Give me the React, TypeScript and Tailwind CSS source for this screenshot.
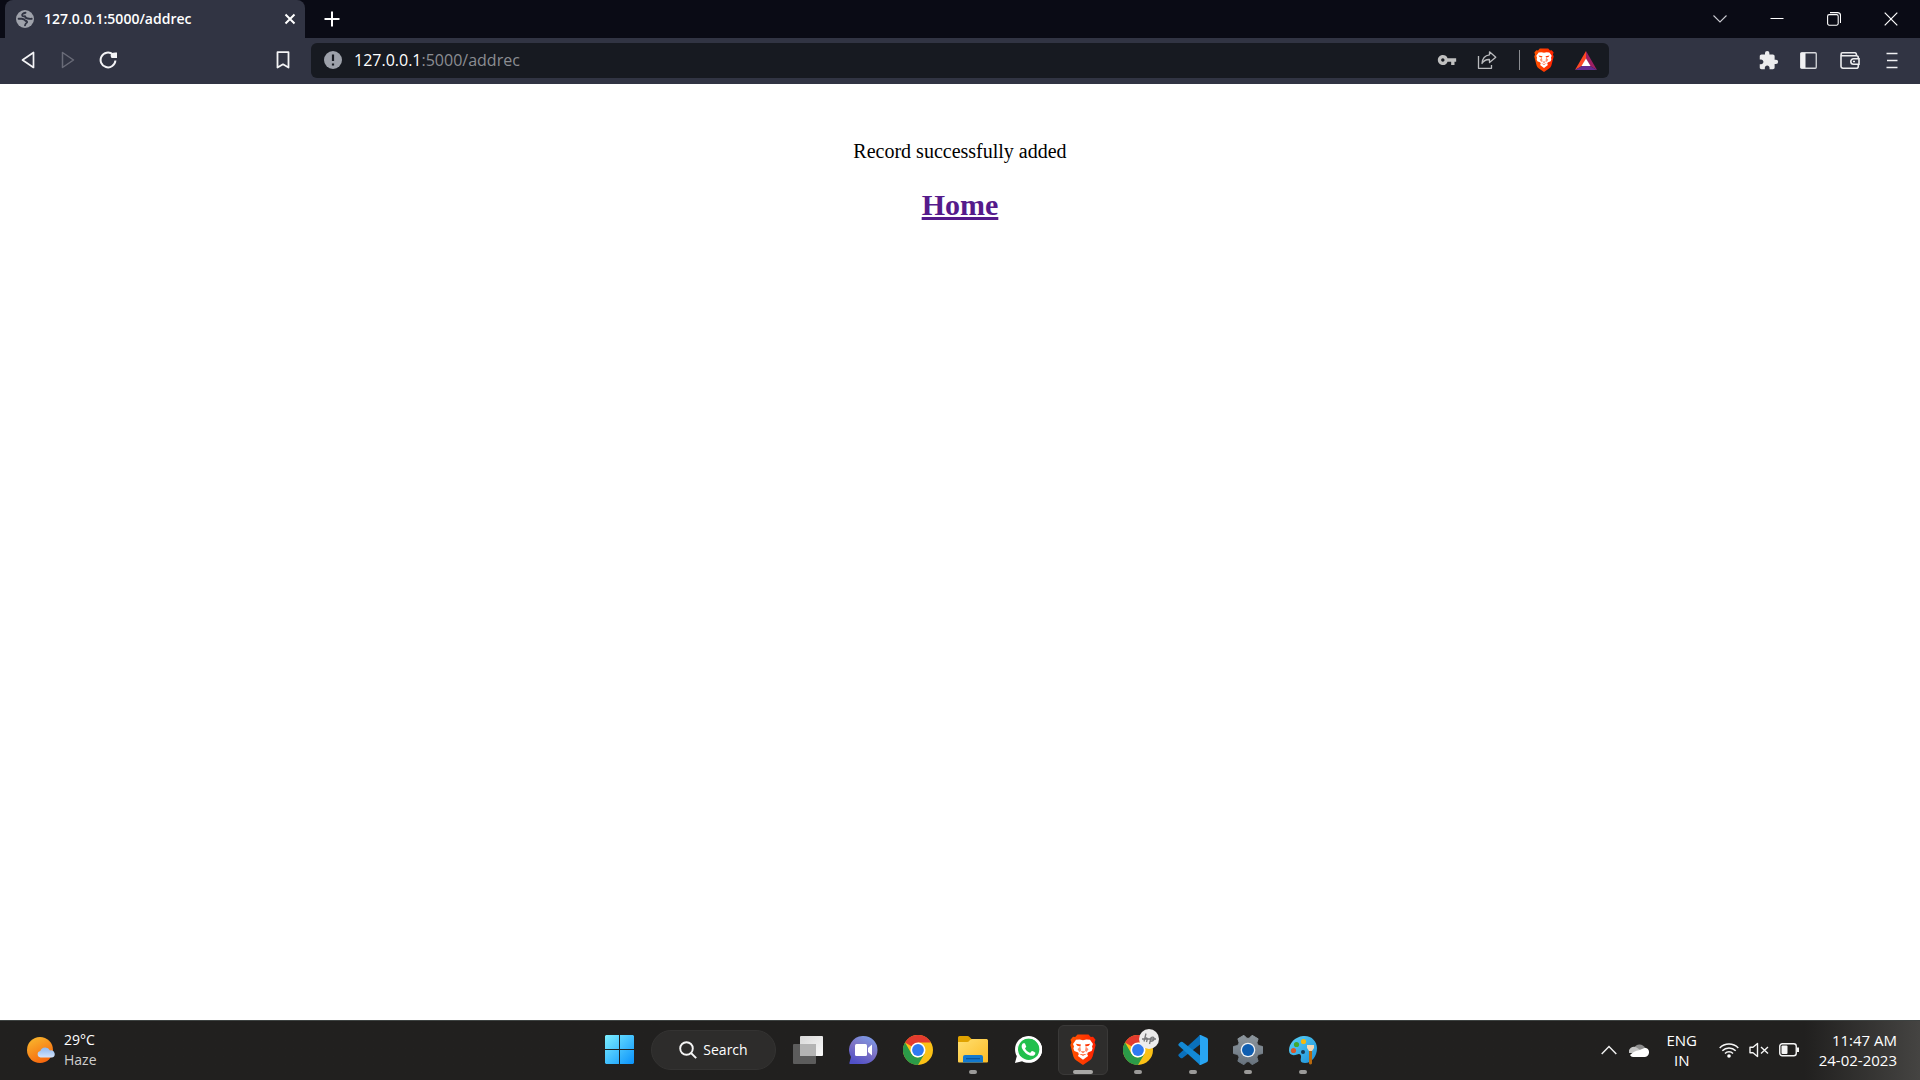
import React from "react";
import { MdExtension, MdVpnKey } from "react-icons/md";
import { FaWhatsapp } from "react-icons/fa";

const UI = "font-['Open_Sans','Noto_Sans',sans-serif]";

function IconButton({ label, className = "", children }: { label: string; className?: string; children: React.ReactNode }) {
  return (
    <button aria-label={label} className={`flex h-8 items-center justify-center ${className}`}>
      {children}
    </button>
  );
}

function BraveLion({ size, id }: { size: string; id: string }) {
  const fill = `url(#${id})`;
  return (
    <svg viewBox="0 0 26 31" className={size} aria-hidden="true">
      <defs>
        <linearGradient id={id} x1="0" x2="26" gradientUnits="userSpaceOnUse">
          <stop offset="0" stopColor="#ff5500" />
          <stop offset="1" stopColor="#ff2000" />
        </linearGradient>
      </defs>
      <path d="M7.500 0.500h11l2.300 2.600 2.200-0.300 2.500 3-0.900 2.400 1 2.800-3 11.500q-0.800 2.500-3 4L13 31l-6.600-4.500q-2.200-1.500-3-4L0.400 11l1-2.800-0.900-2.400 2.500-3 2.200 0.300z" fill={fill} />
      <path d="M13 6.200l3.300-0.700 3.700 0.200 3 4.300-1 2.600 0.600 2-1 2.400-3.800 1.600-0.600 1.700 0.900 1.600L13 25.800l-5.100-3.900 0.900-1.600-0.600-1.700L4.400 17l-1-2.400 0.600-2L3 10l3-4.300 3.700-0.200z" fill="#fff" />
      <path d="M5.800 9.700l5.200 0.900-0.700 1.800-3-0.700zM20.200 9.700L15 10.600l0.700 1.800 3-0.700z" fill={fill} />
      <path d="M10.300 12.400L11 16.800l-1.600 1.300-1.900-2.900zM15.700 12.400L15 16.800l1.600 1.300 1.900-2.900z" fill={fill} fillOpacity="0.550" />
      <path d="M9 19.700l4 0.900 4-0.900-4 2.100z" fill={fill} />
      <path d="M10.500 17.300h5L13 19.300z" fill={fill} fillOpacity="0.700" />
    </svg>
  );
}

function TabStrip() {
  return (
    <header className="flex h-[38px] items-stretch bg-[#0a0b15] pl-[5px] text-white">
      <div className="flex w-[300px] items-center rounded-t-lg bg-[#313443] pl-[11px] pr-[7px]">
        <svg viewBox="0 0 18 18" className="size-[18px]" aria-hidden="true">
          <circle cx="9" cy="9" r="9" fill="#9fa2ab" />
          <g fill="none" stroke="#313443" strokeWidth="1.900" strokeLinecap="round" strokeLinejoin="round">
            <path d="M9.500 2.700Q5.500 3.500 6.300 5.700q0.700 1 2.700 0.600 0.500 2.200 2.700 2.200 2 0.500 4 0.300" />
            <path d="M2.600 8.800h3.200q2.700 0.200 3.500 1.900 2.200 0.300 1.700 1.800-1.500 0.800-2 2.900" />
          </g>
        </svg>
        <span className="ml-2.5 flex-1 text-[14px] font-semibold leading-5">127.0.0.1:5000/addrec</span>
        <button aria-label="Close tab" className="flex size-4 items-center justify-center">
          <svg viewBox="0 0 12 12" className="size-3" fill="none" stroke="#fff" strokeWidth="2">
            <path d="M1.500 1.500l9 9M10.500 1.500l-9 9" />
          </svg>
        </button>
      </div>
      <button aria-label="New tab" className="ml-[19px] flex w-4 items-center justify-center">
        <svg viewBox="0 0 16 16" className="size-4 shrink-0" fill="none" stroke="#fff" strokeWidth="2">
          <path d="M8 0.500v15M0.500 8h15" />
        </svg>
      </button>
      <div className="ml-auto flex">
        <button aria-label="Search tabs" className="flex w-[57px] items-center justify-center">
          <svg viewBox="0 0 14 14" className="size-[14px]" fill="none" stroke="#c9cad0" strokeWidth="1.100">
            <path d="M0.500 3.500L7 10l6.500-6.500" />
          </svg>
        </button>
        <button aria-label="Minimize" className="flex w-[57px] items-center justify-center">
          <svg viewBox="0 0 14 14" className="size-[14px]" stroke="#fff" strokeWidth="1">
            <path d="M0.500 6.500h13" />
          </svg>
        </button>
        <button aria-label="Restore" className="flex w-[57px] items-center justify-center">
          <svg viewBox="0 0 14 14" className="size-[14px]" fill="none" stroke="#fff" strokeWidth="1.100">
            <rect x="0.600" y="2.600" width="10.600" height="10.600" rx="1.600" />
            <path d="M3 0.600h7.500a3 3 0 0 1 3 3V11" />
          </svg>
        </button>
        <button aria-label="Close window" className="flex w-[58px] items-center justify-center">
          <svg viewBox="0 0 14 14" className="size-[14px]" fill="none" stroke="#fff" strokeWidth="1.200">
            <path d="M0.700 0.700l12.600 12.600M13.300 0.700L0.700 13.300" />
          </svg>
        </button>
      </div>
    </header>
  );
}

function Toolbar() {
  return (
    <nav className="flex h-[46px] items-center bg-[#313443] pb-0.5">
      <div className="flex w-[311px] items-center pl-2">
        <IconButton label="Back" className="w-10">
          <svg viewBox="0 0 14 18" className="h-[18px] w-[14px]" fill="none" stroke="#f4f4f6" strokeWidth="1.700" strokeLinejoin="round">
            <path d="M12.500 1.500v15L1.500 9z" />
          </svg>
        </IconButton>
        <IconButton label="Forward" className="w-10">
          <svg viewBox="0 0 14 18" className="h-[18px] w-[14px]" fill="none" stroke="#696b78" strokeWidth="1.500" strokeLinejoin="round">
            <path d="M1.500 1.500v15L12.500 9z" />
          </svg>
        </IconButton>
        <IconButton label="Reload" className="w-10">
          <svg viewBox="0 0 18 18" className="size-[18px]" fill="none" stroke="#f4f4f6" strokeWidth="2">
            <path d="M13.800 3.300A7.400 7.400 0 1 0 16.400 9.500" />
            <path d="M12 2.500q3-1.500 6-1v5.500h-5.500q-1.500-2-0.500-4.500z" fill="#f4f4f6" stroke="none" />
          </svg>
        </IconButton>
        <IconButton label="Bookmark this page" className="ml-auto mr-2 w-10">
          <svg viewBox="0 0 14 18" className="h-[18px] w-[14px]" fill="none" stroke="#f4f4f6" strokeWidth="1.800" strokeLinejoin="round">
            <path d="M1.500 1.200h11v15.300L7 13.300l-5.500 3.200z" />
          </svg>
        </IconButton>
      </div>
      <div className="flex h-[35px] flex-1 items-center rounded-md bg-[#171a21] pl-[13px] pr-3">
        <svg viewBox="0 0 18 18" className="size-[18px] shrink-0" role="img" aria-label="Not secure">
          <circle cx="9" cy="9" r="9" fill="#9da1aa" />
          <path d="M9 3.500v6.500M9 12.500v2" stroke="#171a21" strokeWidth="2.200" />
        </svg>
        <a href="#address" className="ml-3 flex-1 text-[16px] leading-6 text-[#8b8d92]">
          <span className="text-white">127.0.0.1</span>:5000/addrec
        </a>
        <IconButton label="Passwords" className="w-10">
          <MdVpnKey className="size-5 text-[#c0c0c0]" />
        </IconButton>
        <IconButton label="Share this page" className="w-10">
          <svg viewBox="0 0 20 20" className="size-5" fill="none" stroke="#b9babd" strokeWidth="1.300" strokeLinejoin="round">
            <path d="M1.500 6v12.300h13v-3.300" />
            <path d="M12.500 1.800l6.300 5.400-6.300 5.300V9.500C9 9.300 6.800 10.500 5 13.500c0.300-5 3-8.200 7.500-8.700z" />
          </svg>
        </IconButton>
        <span className="ml-3 mr-[9px] h-5 w-px bg-[#8b8d92]" />
        <IconButton label="Brave Shields" className="w-[30px]">
          <BraveLion size="h-6 w-5" id="shield-small" />
        </IconButton>
        <IconButton label="Brave Rewards" className="ml-4 w-[22px]">
          <svg viewBox="0 0 22 19" className="h-[19px] w-[22px]">
            <path d="M11 0L0 19l7.300-4.200L11 8z" fill="#ff4724" />
            <path d="M11 0l11 19-7.300-4.200L11 8z" fill="#9e1f63" />
            <path d="M0 19h22l-7.300-4.200H7.300z" fill="#662d91" />
            <path d="M11 7.500l4.500 7.500h-9z" fill="#fff" />
          </svg>
        </IconButton>
      </div>
      <div className="flex w-[311px] items-center justify-end pr-2">
        <IconButton label="Extensions" className="w-10">
          <MdExtension className="size-[21px] text-[#ececee]" />
        </IconButton>
        <IconButton label="Sidebar" className="w-10">
          <svg viewBox="0 0 17 17" className="size-[17px]">
            <rect x="0.750" y="0.750" width="15.500" height="15.500" rx="1" fill="none" stroke="#d8d9dd" strokeWidth="1.300" />
            <path d="M0.500 1h5v15h-5z" fill="#f0f0f2" />
          </svg>
        </IconButton>
        <IconButton label="Wallet" className="w-[44px]">
          <svg viewBox="0 0 20 17" className="h-[17px] w-5" fill="none" stroke="#ececee" strokeWidth="1.600">
            <path d="M1 3v11.200a2 2 0 0 0 2 2h13.300a2 2 0 0 0 2-2V5.700a2 2 0 0 0-2-2H2.500a1.400 1.400 0 0 1 0-2.900H15q1.500 0 1.500 2.900" />
            <path d="M19 6.800h-5.500a2.700 2.700 0 0 0 0 5.400H19z" fill="#313443" />
            <path d="M13 9.500h2" />
          </svg>
        </IconButton>
        <IconButton label="Menu" className="w-10">
          <svg viewBox="0 0 12 17" className="h-[17px] w-3" stroke="#f0f0f2" strokeWidth="1.700">
            <path d="M0.500 1.500h11M1 8.500h10.500M0.500 15.500h11" />
          </svg>
        </IconButton>
      </div>
    </nav>
  );
}

function ChromeLogo() {
  return (
    <svg viewBox="0 0 30 30" className="size-[30px]" aria-hidden="true">
      <circle cx="15" cy="15" r="15" fill="#fbc116" />
      <path d="M15 15L2 7.500A15 15 0 0 1 28 7.500H15z" fill="#e33b2e" />
      <path d="M2 7.500A15 15 0 0 0 15 30l6.500-11.200L15 22.500a7.500 7.500 0 0 1-6.500-3.700z" fill="#2b9a48" />
      <circle cx="15" cy="15" r="7.500" fill="#fff" />
      <circle cx="15" cy="15" r="5.900" fill="#2f7af0" />
    </svg>
  );
}

function TaskButton({ label, state = "none", children }: { label: string; state?: "none" | "open" | "active"; children: React.ReactNode }) {
  return (
    <button
      aria-label={label}
      className={`relative flex size-[50px] items-center justify-center rounded-md border ${state === "active" ? "border-[#3a3938] bg-[#2e2d2c]" : "border-transparent"}`}
    >
      {children}
      {state === "open" && <span className="absolute bottom-0 left-5 h-1 w-2 rounded-full bg-[#9b9a99]" />}
      {state === "active" && <span className="absolute bottom-0 left-[14px] h-1 w-5 rounded-full bg-[#a9a8a6]" />}
    </button>
  );
}

function Taskbar() {
  return (
    <footer className="grid h-[60px] grid-cols-[1fr_auto_1fr] items-center border-t border-[#3d4241] bg-linear-to-r from-[#21201f] from-94% to-[#454442] pb-0.5 text-white">
      <button className="ml-[26px] flex items-center justify-self-start text-left">
        <svg viewBox="0 0 30 28" className="h-7 w-[30px]" aria-hidden="true">
          <defs>
            <linearGradient id="sun" x1="0.200" y1="0" x2="0.700" y2="1">
              <stop offset="0" stopColor="#f8b62d" />
              <stop offset="1" stopColor="#f7630c" />
            </linearGradient>
            <linearGradient id="cloud" x1="0" y1="0" x2="0" y2="1">
              <stop offset="0" stopColor="#8fb8f0" />
              <stop offset="1" stopColor="#d3e3fb" />
            </linearGradient>
          </defs>
          <circle cx="14" cy="14" r="13" fill="url(#sun)" />
          <path d="M14.500 21.500a3.300 3.300 0 0 1-0.200-6.500 5.300 5.300 0 0 1 9.700-0.600 3.600 3.600 0 0 1 2 7.100z" fill="url(#cloud)" />
        </svg>
        <span className="ml-2 flex flex-col text-[14px] leading-5">
          <span>29°C</span>
          <span className="text-[#cfcecd]">Haze</span>
        </span>
      </button>

      <div className="ml-0.5 flex items-center gap-[5px]">
        <TaskButton label="Start">
          <svg viewBox="0 0 29 29" className="size-[29px]">
            <defs>
              <linearGradient id="win" x1="0" y1="0" x2="29" y2="29" gradientUnits="userSpaceOnUse">
                <stop offset="0" stopColor="#7cefff" />
                <stop offset="1" stopColor="#0a92fb" />
              </linearGradient>
            </defs>
            <path d="M1 0h13v14H0V1zM15 0h13l1 1v13H15zM0 15h14v14H1l-1-1zM15 15h14v13l-1 1H15z" fill="url(#win)" />
          </svg>
        </TaskButton>
        <button className="mx-[2px] flex h-10 w-[125px] items-center justify-center gap-1.5 rounded-full border border-[#343332] bg-[#2d2c2b] text-[14px] leading-5">
          <svg viewBox="0 0 18 18" className="size-[18px]" fill="none" stroke="#f5f5f5" strokeWidth="1.900" aria-hidden="true">
            <circle cx="7.500" cy="7.500" r="6.300" />
            <path d="M12 12l5.200 5.200" />
          </svg>
          Search
        </button>
        <TaskButton label="Task view">
          <svg viewBox="0 0 30 28" className="h-7 w-[30px]">
            <defs>
              <linearGradient id="pane" x1="0" y1="0" x2="1" y2="1">
                <stop offset="0" stopColor="#d8d8d8" />
                <stop offset="1" stopColor="#fafafa" />
              </linearGradient>
            </defs>
            <rect x="7" y="0" width="23" height="20" rx="1" fill="url(#pane)" />
            <rect x="0" y="8" width="23" height="20" rx="1" fill="#6c6c6c" fillOpacity="0.800" />
            <path d="M7 8h16v12H7z" fill="#b4b4b4" />
          </svg>
        </TaskButton>
        <TaskButton label="Chat">
          <svg viewBox="0 0 29 28" className="h-7 w-[29px]">
            <defs>
              <linearGradient id="chat" x1="0.800" y1="0" x2="0.300" y2="1">
                <stop offset="0" stopColor="#7b9ce8" />
                <stop offset="0.500" stopColor="#7d72c4" />
                <stop offset="1" stopColor="#5050c8" />
              </linearGradient>
            </defs>
            <path d="M14.500 0a14 14 0 1 1 0 28H1.500q-1.500 0-1-1.500L2 21A14 14 0 0 1 14.500 0z" fill="url(#chat)" />
            <rect x="6" y="8" width="12" height="12" rx="1.500" fill="#fff" />
            <path d="M19 12l4-3.500v11L19 16z" fill="#fff" />
          </svg>
        </TaskButton>
        <TaskButton label="Google Chrome">
          <ChromeLogo />
        </TaskButton>
        <TaskButton label="File Explorer" state="open">
          <svg viewBox="0 0 30 27" className="h-[27px] w-[30px]">
            <defs>
              <linearGradient id="folder" x1="0" y1="0" x2="1" y2="1">
                <stop offset="0" stopColor="#ffdf70" />
                <stop offset="1" stopColor="#fcbc26" />
              </linearGradient>
            </defs>
            <path d="M0 1.500Q0 0 1.500 0h8q1 0 2 1l2 2H29v10H0z" fill="#e0a200" />
            <path d="M0 6h9q1.500 0 2.500-1.500T14 3h14.500Q30 3 30 4.500v21q0 1-1 1H1q-1 0-1-1z" fill="url(#folder)" />
            <path d="M5 26.500V21q0-2 2-2h16q2 0 2 2v5.500z" fill="#1279cf" />
            <path d="M8 22.700h14" stroke="#07519a" strokeWidth="1.200" />
          </svg>
        </TaskButton>
        <TaskButton label="WhatsApp">
          <span className="relative block size-[27px]">
            <svg viewBox="0 0 27 27" className="absolute inset-0 size-full" aria-hidden="true">
              <path d="M1 26L3 19A12.700 12.700 0 1 1 8 24.500z" fill="#fff" />
              <circle cx="13.700" cy="13.300" r="10.700" fill="#22c04d" />
            </svg>
            <FaWhatsapp className="absolute inset-[-2px] size-[31px] text-white" />
          </span>
        </TaskButton>
        <TaskButton label="Brave" state="active">
          <BraveLion size="h-[31px] w-[26px]" id="shield-large" />
        </TaskButton>
        <TaskButton label="Google Chrome, HP profile" state="open">
          <ChromeLogo />
          <span className="absolute left-[25px] top-[3px] flex size-5 items-center justify-center rounded-full bg-[#ececec]">
            <svg viewBox="0 0 20 20" className="size-5" fill="none" stroke="#77787a" strokeWidth="1.300" aria-hidden="true">
              <path d="M7 4.500L5 12.500M5.800 9.500q3-1.500 2.400 1L7.500 13M12 8.500L10.500 15M12 8.500q3.500-1 3 1.500t-4 2.200M3 10h14" />
            </svg>
          </span>
        </TaskButton>
        <TaskButton label="Visual Studio Code" state="open">
          <svg viewBox="0 0 30 30" className="size-[30px]">
            <path d="M22 0L0.800 19.300q-1 1 0 2l1.800 1.600q1 0.700 2 0L22 9.500z" fill="#0a70bc" />
            <path d="M22 30L0.800 10.700q-1-1 0-2l1.800-1.600q1-0.700 2 0L22 20.500z" fill="#1389d5" />
            <path d="M21 0.300q0.800-0.500 1.700-0.200l6 2.700Q30 3.500 30 4.800v20.400q0 1.300-1.300 2l-6 2.700q-0.900 0.300-1.700-0.200 1 0.300 1-1.200v-27Q22 0 21 0.300z" fill="#28a5f3" />
          </svg>
        </TaskButton>
        <TaskButton label="Settings" state="open">
          <svg viewBox="0 0 30 30" className="size-[30px]">
            <defs>
              <linearGradient id="gear" x1="0" y1="0" x2="0" y2="1">
                <stop offset="0" stopColor="#8d969d" />
                <stop offset="1" stopColor="#68737e" />
              </linearGradient>
            </defs>
            <path
              d="M29.500 11.500v7l-4.200 1q-0.800 1.800-1.500 2.500l1.300 4.200-6 3.500-3-3h-2.200l-3 3-6-3.500L6.200 22Q5.300 21 4.700 19.500l-4.200-1v-7l4.200-1Q5.300 9 6.200 8L4.900 3.800l6-3.500 3 3h2.200l3-3 6 3.500L23.800 8q0.900 1 1.500 2.500z"
              fill="url(#gear)"
              stroke="url(#gear)"
              strokeLinejoin="round"
            />
            <circle cx="15" cy="15" r="7.300" fill="#eef1f4" />
            <circle cx="15" cy="15" r="6" fill="#0f5eb0" />
          </svg>
        </TaskButton>
        <TaskButton label="Paint" state="open">
          <svg viewBox="0 0 28 30" className="h-[30px] w-7">
            <defs>
              <linearGradient id="palette" x1="0" y1="0" x2="1" y2="1">
                <stop offset="0" stopColor="#5ad2f7" />
                <stop offset="1" stopColor="#1b8fd8" />
              </linearGradient>
            </defs>
            <path d="M14 1C22 0 28 6 28 13c0 8-5 15-12 15-5 0-4.500-3-4-5.500s-1-4.500-4-3C4 21 0 20 0 15.500 0 8 6 2 14 1z" fill="url(#palette)" />
            <circle cx="14" cy="17" r="2" fill="#163a56" />
            <circle cx="4.500" cy="15.500" r="2.600" fill="#d9572b" />
            <circle cx="7.500" cy="9.500" r="2.600" fill="#42a82f" />
            <circle cx="14.500" cy="6.500" r="2.600" fill="#f3b90f" />
            <path d="M20 15h3v13.500q-1.500 2-3 0z" fill="#b8690f" />
            <path d="M18 10h7v3l-2 3h-3l-2-3z" fill="#f2d9b8" />
          </svg>
        </TaskButton>
      </div>

      <div className="flex items-center justify-self-end pr-[23px] text-[15px] leading-5">
        <button aria-label="Show hidden icons">
          <svg viewBox="0 0 16 10" className="h-[10px] w-4" fill="none" stroke="#f0f0f0" strokeWidth="1.500">
            <path d="M0.700 9L8 1.500 15.300 9" />
          </svg>
        </button>
        <button aria-label="OneDrive" className="ml-3">
          <svg viewBox="0 0 20 14" className="h-[14px] w-5">
            <path d="M5 5a6 6 0 0 1 11 0L10 9z" fill="#8c8c8c" />
            <path d="M0 10a5 5 0 0 1 7.500-5.500L16 10z" fill="#c4c4c4" />
            <path d="M1 12Q5 8 10 7.300L16 4.700A4.700 4.700 0 0 1 16 14H4Q2 14 1 12z" fill="#fff" />
          </svg>
        </button>
        <button className="ml-[18px] flex w-[30px] flex-col items-center">
          <span>ENG</span>
          <span>IN</span>
        </button>
        <button aria-label="Network, volume and battery" className="ml-[22px] flex items-center gap-2.5">
          <svg viewBox="0 0 20 16" className="h-4 w-5" fill="none" stroke="#f5f5f5" strokeWidth="1.500">
            <path d="M0.700 6a13 13 0 0 1 18.600 0M3.300 8.800a9.400 9.400 0 0 1 13.400 0M6 11.500a5.600 5.600 0 0 1 8 0" />
            <circle cx="10" cy="14" r="1.800" fill="#fff" stroke="none" />
          </svg>
          <svg viewBox="0 0 20 16" className="h-4 w-5" fill="none" stroke="#f5f5f5" strokeWidth="1.400" strokeLinejoin="round">
            <path d="M1 5.200h3L8.500 1.500v13L4 10.800H1z" />
            <path d="M12 5l7 6.500M19 5l-7 6.500" />
          </svg>
          <svg viewBox="0 0 20 14" className="h-[14px] w-5">
            <rect x="0.750" y="0.750" width="16.500" height="12" rx="2.500" fill="none" stroke="#f5f5f5" strokeWidth="1.400" />
            <rect x="2.500" y="2.500" width="6" height="8.500" rx="1" fill="#f5f5f5" />
            <path d="M18 4.500h2v4.500h-2z" fill="#f5f5f5" />
          </svg>
        </button>
        <button className="ml-5 flex flex-col items-end">
          <span>11:47 AM</span>
          <span>24-02-2023</span>
        </button>
      </div>
    </footer>
  );
}

export default function App() {
  return (
    <div className={`flex min-h-screen flex-col bg-white ${UI}`}>
      <TabStrip />
      <Toolbar />
      <main className="flex flex-1 flex-col items-center pt-[55px] font-['Liberation_Serif',serif] text-black">
        <p className="text-[20px] leading-6">Record successfully added</p>
        <h2 className="mt-[25px] text-[30px] font-bold leading-[34px]">
          <a href="#home" className="text-[#551a8b] underline">
            Home
          </a>
        </h2>
      </main>
      <Taskbar />
    </div>
  );
}
